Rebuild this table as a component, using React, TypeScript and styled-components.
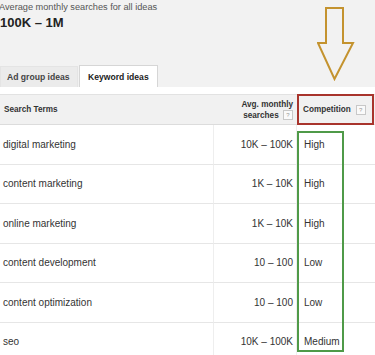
import styled, { createGlobalStyle } from 'styled-components';

type Idea = {
    term: string;
    searches: string;
    competition: string;
};

const ideas: Idea[] = [
    {term: "digital marketing", searches: "10K – 100K", competition: "High"},
    {term: "content marketing", searches: "1K – 10K", competition: "High"},
    {term: "online marketing", searches: "1K – 10K", competition: "High"},
    {term: "content development", searches: "10 – 100", competition: "Low"},
    {term: "content optimization", searches: "10 – 100", competition: "Low"},
    {term: "seo", searches: "10K – 100K", competition: "Medium"},
];

export default function App() {
    return (
        <>
            <GlobalStyle/>
            <Page>
                <TopPanel>
                    <Label>Average monthly searches for all ideas</Label>
                    <BigValue>100K – 1M</BigValue>
                    <Tabs>
                        <Tab>Ad group ideas</Tab>
                        <Tab $active>Keyword ideas</Tab>
                    </Tabs>
                    <Arrow width="38" height="74" viewBox="0 0 38 74">
                        <path d="M9 1 H26 V36 H36 L17.5 72 L1 36 H9 Z"
                              fill="none" stroke="#c4932f" strokeWidth="2" strokeLinejoin="miter"/>
                    </Arrow>
                </TopPanel>
                <Spacer/>
                <Table>
                    <HeaderRow>
                        <HeadCell>Search Terms</HeadCell>
                        <HeadCell $align="right">
                            <span>Avg. monthly<br/>searches <Help>?</Help></span>
                        </HeadCell>
                        <HeadCell $pad="7px">Competition <Help>?</Help></HeadCell>
                    </HeaderRow>
                    {ideas.map((idea) => (
                        <Row key={idea.term}>
                            <Cell>{idea.term}</Cell>
                            <Cell $align="right" $border>{idea.searches}</Cell>
                            <Cell $pad="7px" $border>{idea.competition}</Cell>
                        </Row>
                    ))}
                    <RedBox/>
                    <GreenBox/>
                </Table>
            </Page>
        </>
    )
}

const GlobalStyle = createGlobalStyle`
    body {
        margin: 0;
        background: #ffffff;
        font-family: "Liberation Sans", Arial, sans-serif;
    }
`;

const Page = styled.div`
    width: 375px;
    height: 355px;
    overflow: hidden;
    background: #ffffff;
`;

const TopPanel = styled.div`
    position: relative;
    height: 87px;
    background: #f2f2f2;
    display: flex;
    flex-direction: column;
`;

const Label = styled.div`
    font-size: 9.2px;
    line-height: 14px;
    color: #555;
    margin-left: -1px;
`;

const BigValue = styled.div`
    font-size: 13px;
    font-weight: bold;
    line-height: 18px;
    color: #222;
`;

const Tabs = styled.div`
    margin-top: auto;
    display: flex;
    align-items: flex-end;
    gap: 1px;
    height: 22px;
`;

const Tab = styled.div<{ $active?: boolean }>`
    display: flex;
    align-items: center;
    padding: ${p => p.$active ? "0 8px" : "0 0 0 6px"};
    width: ${p => p.$active ? "auto" : "78px"};
    box-sizing: border-box;
    white-space: nowrap;
    font-size: 8.6px;
    font-weight: bold;
    color: ${p => p.$active ? "#222" : "#444"};
    background: ${p => p.$active ? "#ffffff" : "#ebebeb"};
    border: 1px solid ${p => p.$active ? "#d6d6d6" : "#e4e4e4"};
    border-bottom: none;
    height: ${p => p.$active ? "22px" : "21px"};
`;

const Arrow = styled.svg`
    position: absolute;
    left: 317px;
    top: 7px;
`;

const Spacer = styled.div`
    height: 7px;
    background: #ffffff;
`;

const Table = styled.div`
    position: relative;
    display: grid;
    grid-template-columns: 213px 83px 79px;
`;

const HeaderRow = styled.div`
    display: contents;

    & > div {
        height: 31px;
        background: #f1f1f1;
        border-top: 1px solid #e2e2e2;
        border-bottom: 1px solid #dcdcdc;
        box-sizing: border-box;
    }
`;

const HeadCell = styled.div<{ $align?: string; $pad?: string }>`
    display: flex;
    align-items: center;
    justify-content: ${p => p.$align === "right" ? "flex-end" : "flex-start"};
    text-align: ${p => p.$align ?? "left"};
    padding: ${p => p.$align === "right" ? "0 3px 0 0" : `0 0 0 ${p.$pad ?? "4px"}`};
    font-size: 8.2px;
    line-height: 11px;
    font-weight: bold;
    color: #333;
    white-space: nowrap;
    gap: 3px;
`;

const Help = styled.span`
    display: inline-block;
    width: 8px;
    height: 8px;
    line-height: 8px;
    margin-left: 2px;
    border: 1px solid #c8c8c8;
    background: #fafafa;
    color: #999;
    font-size: 6px;
    font-weight: normal;
    text-align: center;
    vertical-align: middle;
`;

const Row = styled.div`
    display: contents;

    & > div {
        height: 39.5px;
        border-bottom: 1px solid #e6e6e6;
        box-sizing: border-box;
    }
`;

const Cell = styled.div<{ $align?: string; $pad?: string; $border?: boolean }>`
    display: flex;
    align-items: center;
    justify-content: ${p => p.$align === "right" ? "flex-end" : "flex-start"};
    padding: ${p => p.$align === "right" ? "0 3px 0 0" : `0 0 0 ${p.$pad ?? "3px"}`};
    border-left: ${p => p.$border ? "1px solid #eeeeee" : "none"};
    font-size: 10px;
    color: #333;
    white-space: nowrap;
`;

const RedBox = styled.div`
    position: absolute;
    left: 297px;
    top: 0;
    width: 77px;
    height: 31px;
    box-sizing: border-box;
    border: 2px solid #a8342c;
`;

const GreenBox = styled.div`
    position: absolute;
    left: 297px;
    top: 37px;
    width: 47px;
    height: 221px;
    box-sizing: border-box;
    border: 2px solid #4f9a48;
`;
